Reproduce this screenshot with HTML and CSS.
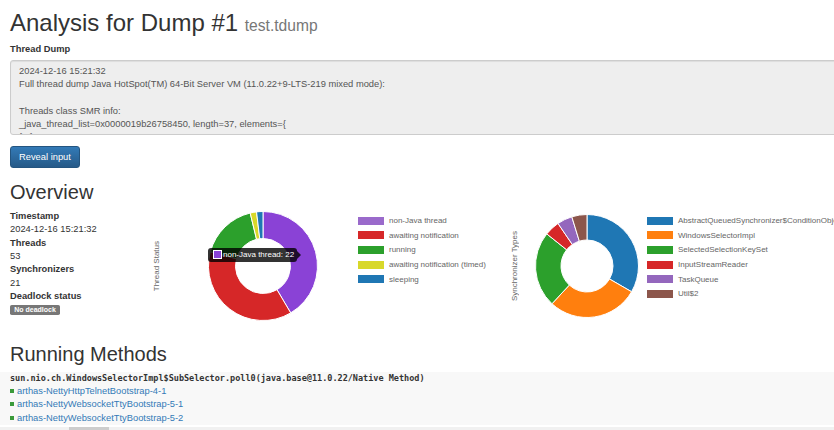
FILE: index.html
```html
<!DOCTYPE html>
<html lang="en">
<head>
<meta charset="utf-8">
<title>Analysis for Dump #1</title>
<link rel="stylesheet" href="styles.css">
</head>
<body>
<div class="page">
  <h1 class="title">Analysis for Dump #1 <small>test.tdump</small></h1>
  <label class="field-label">Thread Dump</label>
  <div class="dump">2024-12-16 15:21:32
Full thread dump Java HotSpot(TM) 64-Bit Server VM (11.0.22+9-LTS-219 mixed mode):

Threads class SMR info:
_java_thread_list=0x0000019b26758450, length=37, elements={
{...}</div>
  <button class="btn" type="button">Reveal input</button>

  <h2 class="section">Overview</h2>
  <div class="overview">
    <dl class="facts">
      <dt>Timestamp</dt>
      <dd>2024-12-16 15:21:32</dd>
      <dt>Threads</dt>
      <dd>53</dd>
      <dt>Synchronizers</dt>
      <dd>21</dd>
      <dt>Deadlock status</dt>
      <dd><span class="badge">No deadlock</span></dd>
    </dl>

    <div class="chart chart-threads">
      <div class="axis-title">Thread Status</div>
      <div class="donut-wrap">
        <svg class="donut" width="110" height="110" viewBox="0 0 110 110">
          <path fill="#8a42d6" stroke="#fff" stroke-width="1" d="M55,0.5 A54.5,54.5 0 0 1 82.71,101.92 L68.98,78.68 A27.5,27.5 0 0 0 55,27.5 Z"/>
          <path fill="#d62728" stroke="#fff" stroke-width="1" d="M82.71,101.92 A54.5,54.5 0 0 1 2.43,40.63 L28.47,47.75 A27.5,27.5 0 0 0 68.98,78.68 Z"/>
          <path fill="#2ca02c" stroke="#fff" stroke-width="1" d="M2.43,40.63 A54.5,54.5 0 0 1 42.20,2.03 L48.54,28.27 A27.5,27.5 0 0 0 28.47,47.75 Z"/>
          <path fill="#d8d82a" stroke="#fff" stroke-width="1" d="M42.20,2.03 A54.5,54.5 0 0 1 48.55,0.88 L51.75,27.69 A27.5,27.5 0 0 0 48.54,28.27 Z"/>
          <path fill="#1f77b4" stroke="#fff" stroke-width="1" d="M48.55,0.88 A54.5,54.5 0 0 1 55,0.5 L55,27.5 A27.5,27.5 0 0 0 51.75,27.69 Z"/>
        </svg>
        <div class="tooltip"><span class="tip-swatch"></span>non-Java thread: 22</div>
      </div>
      <ul class="legend">
        <li><span class="swatch sw-purple"></span>non-Java thread</li>
        <li><span class="swatch sw-red"></span>awaiting notification</li>
        <li><span class="swatch sw-green"></span>running</li>
        <li><span class="swatch sw-yellow"></span>awaiting notification (timed)</li>
        <li><span class="swatch sw-blue"></span>sleeping</li>
      </ul>
    </div>

    <div class="chart chart-sync">
      <div class="axis-title">Synchronizer Types</div>
      <div class="donut-wrap">
        <svg class="donut" width="104" height="104" viewBox="0 0 104 104">
          <path fill="#1f77b4" stroke="#fff" stroke-width="1" d="M52,0.5 A51.5,51.5 0 0 1 96.60,77.75 L74.52,65 A26,26 0 0 0 52,26 Z"/>
          <path fill="#ff7f0e" stroke="#fff" stroke-width="1" d="M96.60,77.75 A51.5,51.5 0 0 1 16.97,89.75 L34.31,71.06 A26,26 0 0 0 74.52,65 Z"/>
          <path fill="#2ca02c" stroke="#fff" stroke-width="1" d="M16.97,89.75 A51.5,51.5 0 0 1 11.74,19.89 L31.67,35.79 A26,26 0 0 0 34.31,71.06 Z"/>
          <path fill="#d62728" stroke="#fff" stroke-width="1" d="M11.74,19.89 A51.5,51.5 0 0 1 22.99,9.45 L37.35,30.52 A26,26 0 0 0 31.67,35.79 Z"/>
          <path fill="#9467bd" stroke="#fff" stroke-width="1" d="M22.99,9.45 A51.5,51.5 0 0 1 36.82,2.79 L44.34,27.15 A26,26 0 0 0 37.35,30.52 Z"/>
          <path fill="#8c564b" stroke="#fff" stroke-width="1" d="M36.82,2.79 A51.5,51.5 0 0 1 52,0.5 L52,26 A26,26 0 0 0 44.34,27.15 Z"/>
        </svg>
      </div>
      <ul class="legend">
        <li><span class="swatch sw-blue"></span>AbstractQueuedSynchronizer$ConditionObject</li>
        <li><span class="swatch sw-orange"></span>WindowsSelectorImpl</li>
        <li><span class="swatch sw-green"></span>SelectedSelectionKeySet</li>
        <li><span class="swatch sw-red"></span>InputStreamReader</li>
        <li><span class="swatch sw-lilac"></span>TaskQueue</li>
        <li><span class="swatch sw-brown"></span>Util$2</li>
      </ul>
    </div>
  </div>

  <h2 class="section section-running">Running Methods</h2>
</div>
<div class="methods">
  <div class="method-sig">sun.nio.ch.WindowsSelectorImpl$SubSelector.poll0(java.base@11.0.22/Native Method)</div>
  <a class="thread-link" href="#"><span class="dot"></span>arthas-NettyHttpTelnetBootstrap-4-1</a>
  <a class="thread-link" href="#"><span class="dot"></span>arthas-NettyWebsocketTtyBootstrap-5-1</a>
  <a class="thread-link" href="#"><span class="dot"></span>arthas-NettyWebsocketTtyBootstrap-5-2</a>
</div>
<div class="hscroll"><div class="thumb"></div></div>
</body>
</html>
```
FILE: styles.css
```css
html, body {
  margin: 0;
  overflow: hidden;
}
body {
  font-family: "Liberation Sans", Arial, sans-serif;
  font-size: 9.33px;
  line-height: 13.33px;
  color: #333;
  background: #fff;
}
.page {
  padding: 9.5px 10px 0;
}
.title {
  margin: 0 0 4px;
  font-size: 24px;
  font-weight: 400;
  line-height: 26.4px;
  color: #333;
}
.title small {
  font-size: 15.6px;
  font-weight: 400;
  color: #777;
}
.field-label {
  display: block;
  font-weight: 700;
  margin-bottom: 3.33px;
}
.dump {
  box-sizing: border-box;
  width: 1000px;
  height: 75px;
  padding: 4px 8px;
  border: 1px solid #ccc;
  border-radius: 3px;
  background: #eee;
  color: #555;
  white-space: pre;
  overflow: hidden;
  box-shadow: inset 0 1px 1px rgba(0, 0, 0, .075);
  margin-bottom: 11px;
}
.btn {
  display: block;
  box-sizing: border-box;
  height: 22px;
  padding: 0 8px;
  font-family: inherit;
  font-size: 9.33px;
  line-height: 20px;
  color: #fff;
  background: linear-gradient(#337ab7, #265a88);
  border: 1px solid #245580;
  border-radius: 3px;
}
.section {
  margin: 13.7px 0 6.67px;
  font-size: 20px;
  font-weight: 400;
  line-height: 22px;
  color: #333;
}
.section-running {
  margin-top: 21px;
}
.overview {
  display: flex;
  align-items: flex-start;
}
.facts {
  flex: none;
  width: 142px;
  margin: 0;
}
.facts dt {
  font-weight: 700;
}
.facts dd {
  margin: 0;
}
.badge {
  background: #777;
  color: #fff;
  font-size: 7px;
  font-weight: 700;
  line-height: 1;
  padding: 1.4px 4.2px 2.1px;
  border-radius: 1.75px;
}
.chart {
  flex: none;
  display: flex;
  align-items: center;
  height: 112px;
}
.chart-threads {
  width: 358px;
}
.axis-title {
  flex: none;
  writing-mode: vertical-rl;
  transform: rotate(180deg);
  font-size: 8px;
  line-height: 10px;
  color: #666;
  white-space: nowrap;
}
.donut-wrap {
  position: relative;
  flex: none;
}
.donut {
  display: block;
}
.chart-threads .donut-wrap {
  margin-left: 46px;
  width: 110px;
  height: 110px;
}
.chart-sync .donut-wrap {
  margin-left: 15px;
  width: 104px;
  height: 104px;
}
.chart-threads .legend {
  margin-left: 40px;
}
.chart-sync .legend {
  margin-left: 8px;
}
.legend {
  list-style: none;
  margin-top: 3.4px;
  margin-bottom: 0;
  padding: 0;
  align-self: flex-start;
  font-size: 8px;
  color: #666;
  white-space: nowrap;
}
.legend li {
  display: flex;
  align-items: center;
  height: 14.67px;
}
.swatch {
  flex: none;
  width: 26px;
  height: 8px;
  margin-right: 5px;
}
.sw-purple { background: #9a6acb; }
.sw-red { background: #d62728; }
.sw-green { background: #2ca02c; }
.sw-yellow { background: #d8d82a; }
.sw-blue { background: #1f77b4; }
.sw-orange { background: #ff7f0e; }
.sw-lilac { background: #9467bd; }
.sw-brown { background: #8c564b; }

.tooltip {
  position: absolute;
  left: 0;
  top: 36.7px;
  box-sizing: border-box;
  height: 14px;
  padding: 0 3px 0 5px;
  display: flex;
  align-items: center;
  background: rgba(0, 0, 0, .8);
  color: #fff;
  font-size: 8px;
  white-space: nowrap;
  border-radius: 3px;
}
.tooltip::after {
  content: "";
  position: absolute;
  left: 100%;
  top: 50%;
  margin-top: -4px;
  border: 4px solid transparent;
  border-left-color: rgba(0, 0, 0, .8);
  border-right-width: 0;
}
.tip-swatch {
  box-sizing: border-box;
  width: 8.5px;
  height: 8.5px;
  border: 1px solid #fff;
  background: #8a42d6;
  margin-right: 1.5px;
}
.methods {
  background: #f8f8f8;
  padding-left: 10px;
}
.method-sig {
  font-family: "DejaVu Sans Mono", "Liberation Mono", monospace;
  font-weight: 700;
  font-size: 8.5px;
  line-height: 13.33px;
  white-space: nowrap;
  color: #333;
}
.thread-link {
  display: block;
  color: #337ab7;
  text-decoration: none;
  white-space: nowrap;
}
.dot {
  display: inline-block;
  width: 4px;
  height: 4px;
  background: #3a9a3a;
  margin-right: 3px;
  vertical-align: 1px;
}
.hscroll {
  height: 6px;
  background: #f1f1f1;
}
.thumb {
  margin-left: 69px;
  width: 40px;
  height: 4px;
  margin-top: 2px;
  background: #cdcdcd;
}
```
